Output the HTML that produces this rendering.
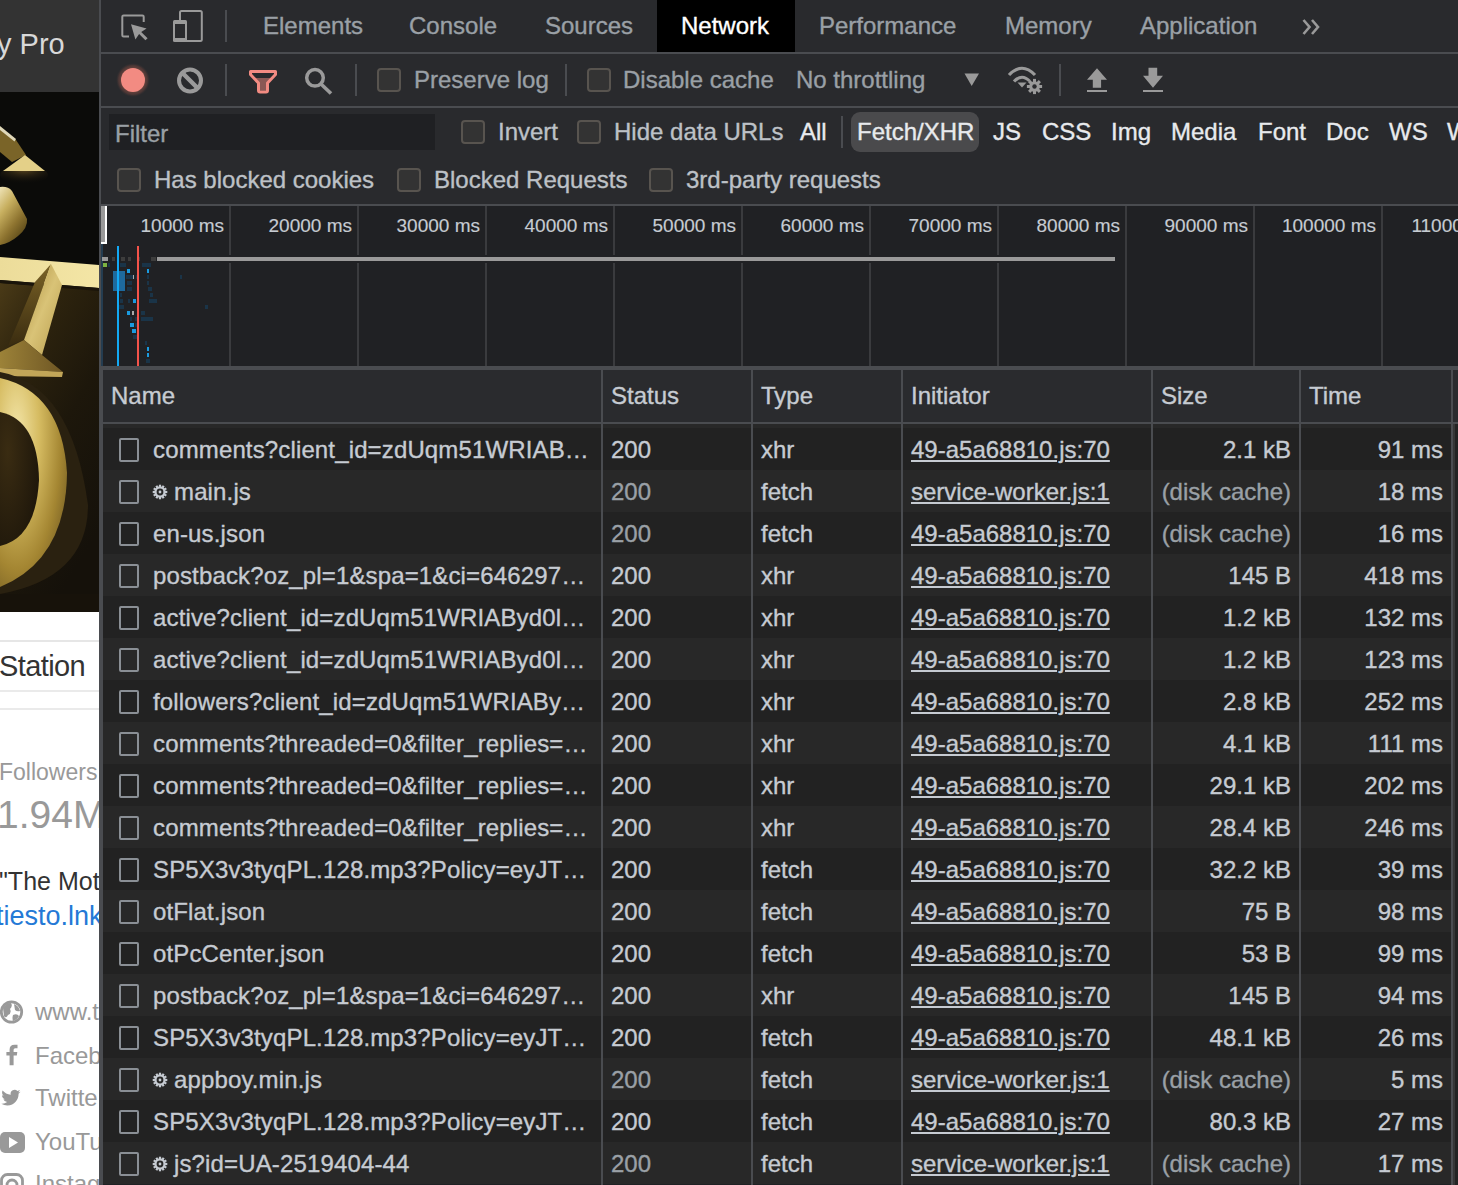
<!DOCTYPE html>
<html><head><meta charset="utf-8"><style>
html,body{margin:0;padding:0;}
body{width:1458px;height:1185px;overflow:hidden;position:relative;background:#202124;font-family:"Liberation Sans", sans-serif;}
.t{position:absolute;white-space:nowrap;font-family:"Liberation Sans", sans-serif;-webkit-text-stroke:0.35px currentColor;}
.lp .t{-webkit-text-stroke:0;}
.r{position:absolute;}
svg{display:block}
</style></head><body>
<div class="r lp" style="left:0;top:0;width:99px;height:1185px;background:#fff;overflow:hidden">
<div class="r" style="left:0;top:0;width:99px;height:92px;background:#333333"></div>
<div class="t" style="left:-3px;top:30px;font-size:29px;line-height:29px;color:#d8d8d8">y Pro</div>
<svg class="r" style="left:0;top:92px" width="99" height="520" viewBox="0 92 99 520">
<defs>
<linearGradient id="gband" x1="0" y1="0" x2="1" y2="0"><stop offset="0" stop-color="#ecdc9a"/><stop offset="1" stop-color="#f4e6a6"/></linearGradient>
<linearGradient id="gpanel" x1="0" y1="0" x2="0.5" y2="1"><stop offset="0" stop-color="#4a3a17"/><stop offset="0.25" stop-color="#2e240e"/><stop offset="0.6" stop-color="#1d170b"/><stop offset="1" stop-color="#15110a"/></linearGradient>
<linearGradient id="gspike" x1="0" y1="0" x2="1" y2="1"><stop offset="0" stop-color="#a88a3a"/><stop offset="0.5" stop-color="#d9c377"/><stop offset="1" stop-color="#b89c4c"/></linearGradient>
<linearGradient id="gspikeL" x1="0" y1="0" x2="0" y2="1"><stop offset="0" stop-color="#7a6226"/><stop offset="1" stop-color="#3a2c10"/></linearGradient>
<linearGradient id="garm" x1="0" y1="0" x2="1" y2="0"><stop offset="0" stop-color="#9c8238"/><stop offset="1" stop-color="#6e5624"/></linearGradient>
<radialGradient id="gring" cx="0.25" cy="0.25" r="0.95"><stop offset="0" stop-color="#f2e4a6"/><stop offset="0.35" stop-color="#d6bc62"/><stop offset="0.7" stop-color="#a48632"/><stop offset="1" stop-color="#6a5420"/></radialGradient>
<radialGradient id="gin" cx="0.2" cy="0.3" r="0.9"><stop offset="0" stop-color="#3a2c12"/><stop offset="1" stop-color="#1c150a"/></radialGradient>
<linearGradient id="gcone" x1="0" y1="0" x2="0.6" y2="1"><stop offset="0" stop-color="#efe4b8"/><stop offset="0.35" stop-color="#c8b060"/><stop offset="0.7" stop-color="#8e7430"/><stop offset="1" stop-color="#5a4818"/></linearGradient>
<radialGradient id="gglow" cx="0.5" cy="0.2" r="0.8"><stop offset="0" stop-color="#5a4620"/><stop offset="1" stop-color="#0c0b09" stop-opacity="0"/></radialGradient>
</defs>
<rect x="0" y="92" width="99" height="520" fill="#0b0b09"/>
<ellipse cx="24" cy="175" rx="24" ry="9" fill="url(#gglow)"/>
<polygon points="0,127 16,140 26,155 12,162 0,152" fill="#7a6428"/>
<polygon points="0,126 16,139 14.5,141.5 0,130" fill="#e0d8b8"/>
<polygon points="3,171 25,155 45,171" fill="#e4d088"/>
<path d="M0,187 Q8,186 12,191 L27,219 Q28,228 18,236 Q10,243 0,245 Z" fill="url(#gcone)"/>
<polygon points="0,283 99,290 99,612 0,612" fill="url(#gpanel)"/>
<polygon points="0,257 99,265 99,288 0,280" fill="url(#gband)"/>
<polygon points="0,280 99,288 99,291 0,283" fill="#1a140a"/>
<polygon points="35,282 51,264 24,340 8,346" fill="url(#gspikeL)"/>
<polygon points="51,264 62,285 42,355 24,340" fill="url(#gspike)"/>
<polygon points="0,352 24,340 42,355 63,372 0,368" fill="url(#garm)"/>
<polygon points="0,368 63,372 62,377 0,376" fill="#c2a658"/>
<path d="M0,372 Q72,385 88,505 Q88,578 0,594 Z" fill="#2a2110"/>
<path d="M0,378 Q62,392 67,473 Q66,560 0,587 Z" fill="url(#gring)"/>
<path d="M0,412 Q38,420 39,480 Q36,538 0,546 Z" fill="url(#gin)"/>
<rect x="0" y="594" width="99" height="18" fill="#17120a"/>
</svg>
<div class="r" style="left:0;top:640px;width:99px;height:2px;background:#e6e6e6"></div>
<div class="t" style="left:-1px;top:652px;font-size:29px;line-height:29px;color:#333;letter-spacing:-0.6px">Station</div>
<div class="r" style="left:0;top:690px;width:99px;height:2px;background:#eaeaea"></div>
<div class="r" style="left:0;top:708px;width:99px;height:2px;background:#eaeaea"></div>
<div class="t" style="left:-1px;top:761px;font-size:23px;line-height:23px;color:#999">Followers</div>
<div class="t" style="left:-3px;top:795px;font-size:39px;line-height:39px;color:#999">1.94M</div>
<div class="t" style="left:-1px;top:869px;font-size:25px;line-height:25px;color:#333">"The Mot</div>
<div class="t" style="left:-4px;top:903px;font-size:27px;line-height:27px;color:#2479d6">tiesto.lnk</div>
<div class="t" style="left:35px;top:1000px;font-size:24px;line-height:24px;color:#999">www.t</div>
<div class="t" style="left:35px;top:1044px;font-size:24px;line-height:24px;color:#999">Faceb</div>
<div class="t" style="left:35px;top:1086px;font-size:24px;line-height:24px;color:#999">Twitte</div>
<div class="t" style="left:35px;top:1130px;font-size:24px;line-height:24px;color:#999">YouTu</div>
<div class="t" style="left:35px;top:1172px;font-size:24px;line-height:24px;color:#999">Instag</div>
<svg class="r" style="left:0;top:990px" width="30" height="195" viewBox="0 990 30 195">
<circle cx="11.5" cy="1012" r="10.2" fill="none" stroke="#999" stroke-width="2.8"/>
<path d="M3,1008 Q6,1003 11,1003 Q13,1006 10,1009 Q12,1013 8,1015 Q6,1019 4,1016 Z M14,1004 Q19,1006 20,1011 Q17,1012 15,1010 Z M13,1015 Q17,1013 19,1016 Q17,1020 13,1021 Q12,1018 13,1015 Z" fill="#999"/>
<path d="M9.6,1065.3 L9.6,1055.5 L6.4,1055.5 L6.4,1052 L9.6,1052 L9.6,1049.5 Q9.6,1044.7 14.5,1044.7 L17.5,1044.7 L17.5,1048.2 L15.2,1048.2 Q13.6,1048.2 13.6,1049.8 L13.6,1052 L17.3,1052 L16.8,1055.5 L13.6,1055.5 L13.6,1065.3 Z" fill="#999"/>
<g transform="translate(1.3,1088) scale(0.8)"><path d="M23.953 4.57a10 10 0 01-2.825.775 4.958 4.958 0 002.163-2.723c-.951.555-2.005.959-3.127 1.184a4.92 4.92 0 00-8.384 4.482C7.69 8.095 4.067 6.13 1.64 3.162a4.822 4.822 0 00-.666 2.475c0 1.71.87 3.213 2.188 4.096a4.904 4.904 0 01-2.228-.616v.06a4.923 4.923 0 003.946 4.827 4.996 4.996 0 01-2.212.085 4.936 4.936 0 004.604 3.417 9.867 9.867 0 01-6.102 2.105c-.39 0-.779-.023-1.17-.067a13.995 13.995 0 007.557 2.209c9.053 0 13.998-7.496 13.998-13.985 0-.21 0-.42-.015-.63A9.935 9.935 0 0024 4.59z" fill="#999"/></g>
<rect x="0" y="1132" width="25" height="21" rx="5" fill="#999"/>
<polygon points="9,1137 9,1148 18,1142.5" fill="#fff"/>
<rect x="1.5" y="1174.5" width="21" height="21" rx="6" fill="none" stroke="#999" stroke-width="2.8"/>
<circle cx="12" cy="1185" r="5" fill="none" stroke="#999" stroke-width="2.8"/>
</svg>
</div>
<div class="r" style="left:99px;top:0px;width:2px;height:1185px;background:#4a4c50;"></div>
<div class="r" style="left:101px;top:0px;width:1357px;height:52px;background:#292a2d;"></div>
<div class="r" style="left:101px;top:52px;width:1357px;height:2px;background:#4a4c50;"></div>
<div class="r" style="left:101px;top:54px;width:1357px;height:52px;background:#292a2d;"></div>
<div class="r" style="left:101px;top:106px;width:1357px;height:2px;background:#4a4c50;"></div>
<div class="r" style="left:101px;top:108px;width:1357px;height:96px;background:#292a2d;"></div>
<div class="r" style="left:101px;top:204px;width:1357px;height:2px;background:#4a4c50;"></div>
<div class="r" style="left:101px;top:206px;width:1357px;height:160px;background:#202124;"></div>
<div class="r" style="left:101px;top:366px;width:1357px;height:4px;background:#4a4c50;"></div>
<svg class="r" style="left:101px;top:0" width="140" height="52" viewBox="101 0 140 52">
<path d="M129,36.6 L123.6,36.6 Q122.3,36.6 122.3,35.3 L122.3,16.7 Q122.3,15.4 123.6,15.4 L142.4,15.4 Q143.7,15.4 143.7,16.7 L143.7,22" fill="none" stroke="#9a9a9a" stroke-width="2"/>
<polygon points="131,24.2 146.6,28.6 141.2,32 147.6,38.2 145.4,40.2 139.1,34 135.4,39.6" fill="#9a9a9a"/>
<rect x="180" y="11.1" width="21.8" height="29.9" rx="1.5" fill="none" stroke="#9a9a9a" stroke-width="2"/>
<rect x="173" y="20" width="14" height="22" rx="1.5" fill="#9a9a9a"/>
<rect x="175" y="24" width="10" height="14" fill="#292a2d"/>
</svg>
<div class="r" style="left:225px;top:10px;width:2px;height:32px;background:#4a4c50;"></div>
<div class="r" style="left:657px;top:0px;width:138px;height:52px;background:#000;"></div>
<div class="t" style="left:263px;top:14px;font-size:24px;line-height:24px;color:#9aa0a6;">Elements</div>
<div class="t" style="left:409px;top:14px;font-size:24px;line-height:24px;color:#9aa0a6;">Console</div>
<div class="t" style="left:545px;top:14px;font-size:24px;line-height:24px;color:#9aa0a6;">Sources</div>
<div class="t" style="left:681px;top:14px;font-size:24px;line-height:24px;color:#ffffff;">Network</div>
<div class="t" style="left:819px;top:14px;font-size:24px;line-height:24px;color:#9aa0a6;">Performance</div>
<div class="t" style="left:1005px;top:14px;font-size:24px;line-height:24px;color:#9aa0a6;">Memory</div>
<div class="t" style="left:1140px;top:14px;font-size:24px;line-height:24px;color:#9aa0a6;">Application</div>
<svg class="r" style="left:1300px;top:17px" width="24" height="20" viewBox="0 0 24 20">
<path d="M3.5,3 L9.5,10 L3.5,17 M12,3 L18,10 L12,17" fill="none" stroke="#9a9a9a" stroke-width="2.6"/>
</svg>
<svg class="r" style="left:101px;top:54px" width="300" height="52" viewBox="101 54 300 52">
<defs><radialGradient id="glow"><stop offset="0.65" stop-color="#6e4640" stop-opacity="1"/><stop offset="0.85" stop-color="#5a3c38" stop-opacity="0.7"/><stop offset="1" stop-color="#3a3032" stop-opacity="0"/></radialGradient></defs>
<circle cx="133" cy="80" r="17" fill="url(#glow)"/>
<circle cx="133" cy="80" r="12" fill="#f28b82"/>
<circle cx="190" cy="80.5" r="11" fill="none" stroke="#9a9a9a" stroke-width="4"/>
<line x1="182.5" y1="73" x2="197.5" y2="88" stroke="#9a9a9a" stroke-width="4.4"/>
<polygon points="254,78 272,78 266.5,84 266.5,90.5 259.5,90.5 259.5,84" fill="#8a5854"/>
<path d="M250.5,71.5 L275.5,71.5 L275.5,74.5 L267.5,83 L267.5,90.5 Q267.5,92 266,92 L260,92 Q258.5,92 258.5,90.5 L258.5,83 L250.5,74.5 Z" fill="none" stroke="#f28b82" stroke-width="3" stroke-linejoin="round"/>
<circle cx="315" cy="77.8" r="8.3" fill="none" stroke="#9a9a9a" stroke-width="3.5"/>
<line x1="321" y1="84" x2="331" y2="93.5" stroke="#9a9a9a" stroke-width="3.6"/>
</svg>
<div class="r" style="left:225px;top:64px;width:2px;height:32px;background:#4a4c50;"></div>
<div class="r" style="left:355px;top:64px;width:2px;height:32px;background:#4a4c50;"></div>
<div class="r" style="left:377px;top:68px;width:20px;height:20px;background:#333333;border:2px solid #58544f;border-radius:4px"></div>
<div class="t" style="left:414px;top:68px;font-size:24px;line-height:24px;color:#9aa0a6;">Preserve log</div>
<div class="r" style="left:565px;top:64px;width:2px;height:32px;background:#4a4c50;"></div>
<div class="r" style="left:587px;top:68px;width:20px;height:20px;background:#333333;border:2px solid #58544f;border-radius:4px"></div>
<div class="t" style="left:623px;top:68px;font-size:24px;line-height:24px;color:#9aa0a6;">Disable cache</div>
<div class="t" style="left:796px;top:68px;font-size:24px;line-height:24px;color:#9aa0a6;">No throttling</div>
<svg class="r" style="left:955px;top:54px" width="220" height="52" viewBox="955 54 220 52">
<polygon points="964.5,73.5 979,73.5 971.7,86" fill="#9a9a9a"/>
<path d="M1009,75 Q1022,61.5 1035,75" fill="none" stroke="#9a9a9a" stroke-width="3.2"/>
<path d="M1014,81.5 Q1022,73 1030,81.5" fill="none" stroke="#9a9a9a" stroke-width="3.2"/>
<polygon points="1017.5,82.5 1026.5,82.5 1022,87.5" fill="#9a9a9a"/>
<circle cx="1034.5" cy="86.5" r="7.5" fill="#292a2d"/>
<circle cx="1034.5" cy="86.5" r="5.3" fill="#9a9a9a"/><rect x="1033.0" y="78.9" width="3" height="3.5" transform="rotate(0 1034.5 86.5)" fill="#9a9a9a"/><rect x="1033.0" y="78.9" width="3" height="3.5" transform="rotate(45 1034.5 86.5)" fill="#9a9a9a"/><rect x="1033.0" y="78.9" width="3" height="3.5" transform="rotate(90 1034.5 86.5)" fill="#9a9a9a"/><rect x="1033.0" y="78.9" width="3" height="3.5" transform="rotate(135 1034.5 86.5)" fill="#9a9a9a"/><rect x="1033.0" y="78.9" width="3" height="3.5" transform="rotate(180 1034.5 86.5)" fill="#9a9a9a"/><rect x="1033.0" y="78.9" width="3" height="3.5" transform="rotate(225 1034.5 86.5)" fill="#9a9a9a"/><rect x="1033.0" y="78.9" width="3" height="3.5" transform="rotate(270 1034.5 86.5)" fill="#9a9a9a"/><rect x="1033.0" y="78.9" width="3" height="3.5" transform="rotate(315 1034.5 86.5)" fill="#9a9a9a"/>
<circle cx="1034.5" cy="86.5" r="2.2" fill="#292a2d"/>
<polygon points="1097,68.3 1107,79.8 1101.1,79.8 1101.1,87.7 1092.8,87.7 1092.8,79.8 1087,79.8" fill="#9a9a9a"/>
<rect x="1087" y="90" width="20" height="2" fill="#9a9a9a"/>
<polygon points="1148.5,67.8 1157.2,67.8 1157.2,75.8 1163,75.8 1153,87.7 1143,75.8 1148.5,75.8" fill="#9a9a9a"/>
<rect x="1143" y="90" width="20" height="2" fill="#9a9a9a"/>
</svg>
<div class="r" style="left:1059px;top:64px;width:2px;height:32px;background:#4a4c50;"></div>
<div class="r" style="left:109px;top:114px;width:326px;height:36px;background:#1f2023;"></div>
<div class="t" style="left:115px;top:122px;font-size:24px;line-height:24px;color:#9aa0a6;">Filter</div>
<div class="r" style="left:461px;top:120px;width:20px;height:20px;background:#333333;border:2px solid #58544f;border-radius:4px"></div>
<div class="t" style="left:498px;top:120px;font-size:24px;line-height:24px;color:#bdc1c6;">Invert</div>
<div class="r" style="left:577px;top:120px;width:20px;height:20px;background:#333333;border:2px solid #58544f;border-radius:4px"></div>
<div class="t" style="left:614px;top:120px;font-size:24px;line-height:24px;color:#bdc1c6;">Hide data URLs</div>
<div class="t" style="left:800px;top:120px;font-size:24px;line-height:24px;color:#e8eaed;">All</div>
<div class="r" style="left:841px;top:116px;width:2px;height:32px;background:#4a4c50;"></div>
<div class="r" style="left:851px;top:112px;width:128px;height:40px;background:#4a4a4c;border-radius:9px"></div>
<div class="t" style="left:857px;top:120px;font-size:24px;line-height:24px;color:#e8eaed;">Fetch/XHR</div>
<div class="t" style="left:993px;top:120px;font-size:24px;line-height:24px;color:#e8eaed;">JS</div>
<div class="t" style="left:1042px;top:120px;font-size:24px;line-height:24px;color:#e8eaed;">CSS</div>
<div class="t" style="left:1111px;top:120px;font-size:24px;line-height:24px;color:#e8eaed;">Img</div>
<div class="t" style="left:1171px;top:120px;font-size:24px;line-height:24px;color:#e8eaed;">Media</div>
<div class="t" style="left:1258px;top:120px;font-size:24px;line-height:24px;color:#e8eaed;">Font</div>
<div class="t" style="left:1326px;top:120px;font-size:24px;line-height:24px;color:#e8eaed;">Doc</div>
<div class="t" style="left:1389px;top:120px;font-size:24px;line-height:24px;color:#e8eaed;">WS</div>
<div class="t" style="left:1447px;top:120px;font-size:24px;line-height:24px;color:#e8eaed;">W</div>
<div class="r" style="left:117px;top:168px;width:20px;height:20px;background:#333333;border:2px solid #58544f;border-radius:4px"></div>
<div class="t" style="left:154px;top:168px;font-size:24px;line-height:24px;color:#bdc1c6;">Has blocked cookies</div>
<div class="r" style="left:397px;top:168px;width:20px;height:20px;background:#333333;border:2px solid #58544f;border-radius:4px"></div>
<div class="t" style="left:434px;top:168px;font-size:24px;line-height:24px;color:#bdc1c6;">Blocked Requests</div>
<div class="r" style="left:649px;top:168px;width:20px;height:20px;background:#333333;border:2px solid #58544f;border-radius:4px"></div>
<div class="t" style="left:686px;top:168px;font-size:24px;line-height:24px;color:#bdc1c6;">3rd-party requests</div>
<div class="r" style="left:229px;top:206px;width:2px;height:160px;background:#3a3b3e;"></div>
<div class="r" style="left:357px;top:206px;width:2px;height:160px;background:#3a3b3e;"></div>
<div class="r" style="left:485px;top:206px;width:2px;height:160px;background:#3a3b3e;"></div>
<div class="r" style="left:613px;top:206px;width:2px;height:160px;background:#3a3b3e;"></div>
<div class="r" style="left:741px;top:206px;width:2px;height:160px;background:#3a3b3e;"></div>
<div class="r" style="left:869px;top:206px;width:2px;height:160px;background:#3a3b3e;"></div>
<div class="r" style="left:997px;top:206px;width:2px;height:160px;background:#3a3b3e;"></div>
<div class="r" style="left:1125px;top:206px;width:2px;height:160px;background:#3a3b3e;"></div>
<div class="r" style="left:1253px;top:206px;width:2px;height:160px;background:#3a3b3e;"></div>
<div class="r" style="left:1381px;top:206px;width:2px;height:160px;background:#3a3b3e;"></div>
<div class="t" style="right:1234px;top:216px;font-size:19px;line-height:19px;color:#c6cbd2;-webkit-text-stroke:0.15px currentColor">10000 ms</div>
<div class="t" style="right:1106px;top:216px;font-size:19px;line-height:19px;color:#c6cbd2;-webkit-text-stroke:0.15px currentColor">20000 ms</div>
<div class="t" style="right:978px;top:216px;font-size:19px;line-height:19px;color:#c6cbd2;-webkit-text-stroke:0.15px currentColor">30000 ms</div>
<div class="t" style="right:850px;top:216px;font-size:19px;line-height:19px;color:#c6cbd2;-webkit-text-stroke:0.15px currentColor">40000 ms</div>
<div class="t" style="right:722px;top:216px;font-size:19px;line-height:19px;color:#c6cbd2;-webkit-text-stroke:0.15px currentColor">50000 ms</div>
<div class="t" style="right:594px;top:216px;font-size:19px;line-height:19px;color:#c6cbd2;-webkit-text-stroke:0.15px currentColor">60000 ms</div>
<div class="t" style="right:466px;top:216px;font-size:19px;line-height:19px;color:#c6cbd2;-webkit-text-stroke:0.15px currentColor">70000 ms</div>
<div class="t" style="right:338px;top:216px;font-size:19px;line-height:19px;color:#c6cbd2;-webkit-text-stroke:0.15px currentColor">80000 ms</div>
<div class="t" style="right:210px;top:216px;font-size:19px;line-height:19px;color:#c6cbd2;-webkit-text-stroke:0.15px currentColor">90000 ms</div>
<div class="t" style="right:82px;top:216px;font-size:19px;line-height:19px;color:#c6cbd2;-webkit-text-stroke:0.15px currentColor">100000 ms</div>
<div class="t" style="right:-46px;top:216px;font-size:19px;line-height:19px;color:#c6cbd2;-webkit-text-stroke:0.15px currentColor">110000 ms</div>
<div class="r" style="left:101px;top:206px;width:4px;height:36px;background:#9a9a9a;"></div>
<div class="r" style="left:105px;top:206px;width:2px;height:38px;background:#ffffff;"></div>
<div class="r" style="left:101px;top:242px;width:6px;height:2px;background:#ffffff;"></div>
<div class="r" style="left:101px;top:244px;width:2px;height:122px;background:#243c50;"></div>
<div class="r" style="left:155px;top:255px;width:961px;height:8px;background:#202124;"></div>
<div class="r" style="left:157px;top:257px;width:958px;height:4px;background:#9a9a9a;"></div>
<div class="r" style="left:102px;top:257px;width:6px;height:4px;background:#9a9a9a;"></div>
<div class="r" style="left:112px;top:257px;width:3px;height:4px;background:#3d3d3d;"></div>
<div class="r" style="left:121px;top:257px;width:4px;height:4px;background:#3d3d3d;"></div>
<div class="r" style="left:128px;top:257px;width:3px;height:4px;background:#3d3d3d;"></div>
<div class="r" style="left:137px;top:257px;width:3px;height:4px;background:#3d3d3d;"></div>
<div class="r" style="left:151px;top:257px;width:5px;height:4px;background:#3d3d3d;"></div>
<div class="r" style="left:103px;top:263px;width:4px;height:4px;background:#7cb342;"></div>
<div class="r" style="left:113px;top:271px;width:12px;height:20px;background:#1e6a9e;"></div>
<div class="r" style="left:108px;top:263px;width:2px;height:4px;background:#1a3448;"></div>
<div class="r" style="left:120px;top:263px;width:6px;height:4px;background:#1a3448;"></div>
<div class="r" style="left:142px;top:263px;width:9px;height:4px;background:#1a3448;"></div>
<div class="r" style="left:127px;top:269px;width:3px;height:4px;background:#1a9be0;"></div>
<div class="r" style="left:147px;top:269px;width:2px;height:4px;background:#1a9be0;"></div>
<div class="r" style="left:126px;top:275px;width:7px;height:4px;background:#1a3448;"></div>
<div class="r" style="left:133px;top:275px;width:1px;height:4px;background:#aaaaaa;"></div>
<div class="r" style="left:136px;top:275px;width:3px;height:4px;background:#1a3448;"></div>
<div class="r" style="left:147px;top:275px;width:2px;height:4px;background:#1a3448;"></div>
<div class="r" style="left:180px;top:275px;width:2px;height:4px;background:#1a3448;"></div>
<div class="r" style="left:127px;top:281px;width:5px;height:4px;background:#1a3448;"></div>
<div class="r" style="left:147px;top:281px;width:2px;height:4px;background:#1a3448;"></div>
<div class="r" style="left:127px;top:287px;width:5px;height:4px;background:#1a3448;"></div>
<div class="r" style="left:148px;top:287px;width:4px;height:4px;background:#1a3448;"></div>
<div class="r" style="left:120px;top:293px;width:2px;height:4px;background:#1a3448;"></div>
<div class="r" style="left:150px;top:293px;width:3px;height:4px;background:#1a3448;"></div>
<div class="r" style="left:120px;top:299px;width:3px;height:4px;background:#1a3448;"></div>
<div class="r" style="left:128px;top:299px;width:2px;height:4px;background:#1a3448;"></div>
<div class="r" style="left:133px;top:299px;width:3px;height:4px;background:#1a9be0;"></div>
<div class="r" style="left:149px;top:299px;width:8px;height:4px;background:#1a3448;"></div>
<div class="r" style="left:119px;top:305px;width:5px;height:4px;background:#1a3448;"></div>
<div class="r" style="left:205px;top:305px;width:3px;height:4px;background:#1a3448;"></div>
<div class="r" style="left:127px;top:311px;width:3px;height:4px;background:#1a9be0;"></div>
<div class="r" style="left:132px;top:311px;width:2px;height:4px;background:#aaaaaa;"></div>
<div class="r" style="left:141px;top:311px;width:4px;height:4px;background:#1a3448;"></div>
<div class="r" style="left:130px;top:317px;width:2px;height:4px;background:#1a3448;"></div>
<div class="r" style="left:135px;top:317px;width:2px;height:4px;background:#1a3448;"></div>
<div class="r" style="left:141px;top:317px;width:12px;height:4px;background:#1a3448;"></div>
<div class="r" style="left:130px;top:323px;width:4px;height:4px;background:#1a9be0;"></div>
<div class="r" style="left:135px;top:323px;width:2px;height:4px;background:#1a3448;"></div>
<div class="r" style="left:132px;top:329px;width:4px;height:4px;background:#1a9be0;"></div>
<div class="r" style="left:133px;top:335px;width:4px;height:4px;background:#1a3448;"></div>
<div class="r" style="left:145px;top:341px;width:2px;height:4px;background:#1a3448;"></div>
<div class="r" style="left:147px;top:347px;width:2px;height:4px;background:#1a9be0;"></div>
<div class="r" style="left:147px;top:353px;width:2px;height:4px;background:#1a9be0;"></div>
<div class="r" style="left:146px;top:359px;width:4px;height:4px;background:#1a3448;"></div>
<div class="r" style="left:117px;top:246px;width:2px;height:120px;background:#12a9f5;"></div>
<div class="r" style="left:137px;top:246px;width:2px;height:120px;background:#f4534a;"></div>
<div class="r" style="left:101px;top:370px;width:1357px;height:52px;background:#2a2b2e;"></div>
<div class="r" style="left:101px;top:422px;width:1357px;height:2px;background:#4a4c50;"></div>
<div class="r" style="left:101px;top:370px;width:2px;height:815px;background:#4a4c50;"></div>
<div class="t" style="left:111px;top:384px;font-size:24px;line-height:24px;color:#c6cbd2;">Name</div>
<div class="t" style="left:611px;top:384px;font-size:24px;line-height:24px;color:#c6cbd2;">Status</div>
<div class="t" style="left:761px;top:384px;font-size:24px;line-height:24px;color:#c6cbd2;">Type</div>
<div class="t" style="left:911px;top:384px;font-size:24px;line-height:24px;color:#c6cbd2;">Initiator</div>
<div class="t" style="left:1161px;top:384px;font-size:24px;line-height:24px;color:#c6cbd2;">Size</div>
<div class="t" style="left:1309px;top:384px;font-size:24px;line-height:24px;color:#c6cbd2;">Time</div>
<div class="r" style="left:103px;top:424px;width:1355px;height:4px;background:#282828;"></div>
<div class="r" style="left:103px;top:428px;width:1355px;height:42px;background:#222222;"></div>
<div class="r" style="left:103px;top:470px;width:1355px;height:42px;background:#282828;"></div>
<div class="r" style="left:103px;top:512px;width:1355px;height:42px;background:#222222;"></div>
<div class="r" style="left:103px;top:554px;width:1355px;height:42px;background:#282828;"></div>
<div class="r" style="left:103px;top:596px;width:1355px;height:42px;background:#222222;"></div>
<div class="r" style="left:103px;top:638px;width:1355px;height:42px;background:#282828;"></div>
<div class="r" style="left:103px;top:680px;width:1355px;height:42px;background:#222222;"></div>
<div class="r" style="left:103px;top:722px;width:1355px;height:42px;background:#282828;"></div>
<div class="r" style="left:103px;top:764px;width:1355px;height:42px;background:#222222;"></div>
<div class="r" style="left:103px;top:806px;width:1355px;height:42px;background:#282828;"></div>
<div class="r" style="left:103px;top:848px;width:1355px;height:42px;background:#222222;"></div>
<div class="r" style="left:103px;top:890px;width:1355px;height:42px;background:#282828;"></div>
<div class="r" style="left:103px;top:932px;width:1355px;height:42px;background:#222222;"></div>
<div class="r" style="left:103px;top:974px;width:1355px;height:42px;background:#282828;"></div>
<div class="r" style="left:103px;top:1016px;width:1355px;height:42px;background:#222222;"></div>
<div class="r" style="left:103px;top:1058px;width:1355px;height:42px;background:#282828;"></div>
<div class="r" style="left:103px;top:1100px;width:1355px;height:42px;background:#222222;"></div>
<div class="r" style="left:103px;top:1142px;width:1355px;height:42px;background:#282828;"></div>
<div class="r" style="left:1453px;top:424px;width:5px;height:761px;background:#232323;"></div>
<div class="r" style="left:1453px;top:424px;width:2px;height:761px;background:#363636;"></div>
<div class="r" style="left:601px;top:370px;width:2px;height:815px;background:#4a4c50;"></div>
<div class="r" style="left:751px;top:370px;width:2px;height:815px;background:#4a4c50;"></div>
<div class="r" style="left:901px;top:370px;width:2px;height:815px;background:#4a4c50;"></div>
<div class="r" style="left:1151px;top:370px;width:2px;height:815px;background:#4a4c50;"></div>
<div class="r" style="left:1299px;top:370px;width:2px;height:815px;background:#4a4c50;"></div>
<div class="r" style="left:1451px;top:370px;width:2px;height:815px;background:#4a4c50;"></div>
<div class="r" style="left:119px;top:438px;width:16px;height:20px;background:#222222;border:2px solid #8a8f95;border-radius:2px"></div>
<div class="t" style="left:153px;top:438px;font-size:24px;line-height:24px;color:#c6cbd2;letter-spacing:0.14px">comments?client_id=zdUqm51WRIAB…</div>
<div class="t" style="left:611px;top:438px;font-size:24px;line-height:24px;color:#c6cbd2;">200</div>
<div class="t" style="left:761px;top:438px;font-size:24px;line-height:24px;color:#c6cbd2;">xhr</div>
<div class="t" style="left:911px;top:438px;font-size:24px;line-height:24px;color:#c6cbd2;text-decoration:underline;text-underline-offset:2px;text-decoration-thickness:2px">49-a5a68810.js:70</div>
<div class="t" style="right:167px;top:438px;font-size:24px;line-height:24px;color:#c6cbd2;">2.1 kB</div>
<div class="t" style="right:15px;top:438px;font-size:24px;line-height:24px;color:#c6cbd2;">91 ms</div>
<div class="r" style="left:119px;top:480px;width:16px;height:20px;background:#282828;border:2px solid #8a8f95;border-radius:2px"></div>
<svg width="16" height="16" viewBox="-8 -8 16 16" style="position:absolute;left:152px;top:484.4px"><g fill="#c6cbd2"><circle r="5.7"/><rect x="-1.1" y="-7.3" width="2.2" height="2.6" transform="rotate(0)"/><rect x="-1.1" y="-7.3" width="2.2" height="2.6" transform="rotate(30)"/><rect x="-1.1" y="-7.3" width="2.2" height="2.6" transform="rotate(60)"/><rect x="-1.1" y="-7.3" width="2.2" height="2.6" transform="rotate(90)"/><rect x="-1.1" y="-7.3" width="2.2" height="2.6" transform="rotate(120)"/><rect x="-1.1" y="-7.3" width="2.2" height="2.6" transform="rotate(150)"/><rect x="-1.1" y="-7.3" width="2.2" height="2.6" transform="rotate(180)"/><rect x="-1.1" y="-7.3" width="2.2" height="2.6" transform="rotate(210)"/><rect x="-1.1" y="-7.3" width="2.2" height="2.6" transform="rotate(240)"/><rect x="-1.1" y="-7.3" width="2.2" height="2.6" transform="rotate(270)"/><rect x="-1.1" y="-7.3" width="2.2" height="2.6" transform="rotate(300)"/><rect x="-1.1" y="-7.3" width="2.2" height="2.6" transform="rotate(330)"/></g><circle r="3.4" fill="#282828"/><circle r="1.4" fill="#c6cbd2"/></svg>
<div class="t" style="left:174px;top:480px;font-size:24px;line-height:24px;color:#c6cbd2;letter-spacing:0.14px">main.js</div>
<div class="t" style="left:611px;top:480px;font-size:24px;line-height:24px;color:#9aa0a6;">200</div>
<div class="t" style="left:761px;top:480px;font-size:24px;line-height:24px;color:#c6cbd2;">fetch</div>
<div class="t" style="left:911px;top:480px;font-size:24px;line-height:24px;color:#c6cbd2;text-decoration:underline;text-underline-offset:2px;text-decoration-thickness:2px">service-worker.js:1</div>
<div class="t" style="right:167px;top:480px;font-size:24px;line-height:24px;color:#9aa0a6;">(disk cache)</div>
<div class="t" style="right:15px;top:480px;font-size:24px;line-height:24px;color:#c6cbd2;">18 ms</div>
<div class="r" style="left:119px;top:522px;width:16px;height:20px;background:#222222;border:2px solid #8a8f95;border-radius:2px"></div>
<div class="t" style="left:153px;top:522px;font-size:24px;line-height:24px;color:#c6cbd2;letter-spacing:0.14px">en-us.json</div>
<div class="t" style="left:611px;top:522px;font-size:24px;line-height:24px;color:#9aa0a6;">200</div>
<div class="t" style="left:761px;top:522px;font-size:24px;line-height:24px;color:#c6cbd2;">fetch</div>
<div class="t" style="left:911px;top:522px;font-size:24px;line-height:24px;color:#c6cbd2;text-decoration:underline;text-underline-offset:2px;text-decoration-thickness:2px">49-a5a68810.js:70</div>
<div class="t" style="right:167px;top:522px;font-size:24px;line-height:24px;color:#9aa0a6;">(disk cache)</div>
<div class="t" style="right:15px;top:522px;font-size:24px;line-height:24px;color:#c6cbd2;">16 ms</div>
<div class="r" style="left:119px;top:564px;width:16px;height:20px;background:#282828;border:2px solid #8a8f95;border-radius:2px"></div>
<div class="t" style="left:153px;top:564px;font-size:24px;line-height:24px;color:#c6cbd2;letter-spacing:0.14px">postback?oz_pl=1&amp;spa=1&amp;ci=646297…</div>
<div class="t" style="left:611px;top:564px;font-size:24px;line-height:24px;color:#c6cbd2;">200</div>
<div class="t" style="left:761px;top:564px;font-size:24px;line-height:24px;color:#c6cbd2;">xhr</div>
<div class="t" style="left:911px;top:564px;font-size:24px;line-height:24px;color:#c6cbd2;text-decoration:underline;text-underline-offset:2px;text-decoration-thickness:2px">49-a5a68810.js:70</div>
<div class="t" style="right:167px;top:564px;font-size:24px;line-height:24px;color:#c6cbd2;">145 B</div>
<div class="t" style="right:15px;top:564px;font-size:24px;line-height:24px;color:#c6cbd2;">418 ms</div>
<div class="r" style="left:119px;top:606px;width:16px;height:20px;background:#222222;border:2px solid #8a8f95;border-radius:2px"></div>
<div class="t" style="left:153px;top:606px;font-size:24px;line-height:24px;color:#c6cbd2;letter-spacing:0.14px">active?client_id=zdUqm51WRIAByd0l…</div>
<div class="t" style="left:611px;top:606px;font-size:24px;line-height:24px;color:#c6cbd2;">200</div>
<div class="t" style="left:761px;top:606px;font-size:24px;line-height:24px;color:#c6cbd2;">xhr</div>
<div class="t" style="left:911px;top:606px;font-size:24px;line-height:24px;color:#c6cbd2;text-decoration:underline;text-underline-offset:2px;text-decoration-thickness:2px">49-a5a68810.js:70</div>
<div class="t" style="right:167px;top:606px;font-size:24px;line-height:24px;color:#c6cbd2;">1.2 kB</div>
<div class="t" style="right:15px;top:606px;font-size:24px;line-height:24px;color:#c6cbd2;">132 ms</div>
<div class="r" style="left:119px;top:648px;width:16px;height:20px;background:#282828;border:2px solid #8a8f95;border-radius:2px"></div>
<div class="t" style="left:153px;top:648px;font-size:24px;line-height:24px;color:#c6cbd2;letter-spacing:0.14px">active?client_id=zdUqm51WRIAByd0l…</div>
<div class="t" style="left:611px;top:648px;font-size:24px;line-height:24px;color:#c6cbd2;">200</div>
<div class="t" style="left:761px;top:648px;font-size:24px;line-height:24px;color:#c6cbd2;">xhr</div>
<div class="t" style="left:911px;top:648px;font-size:24px;line-height:24px;color:#c6cbd2;text-decoration:underline;text-underline-offset:2px;text-decoration-thickness:2px">49-a5a68810.js:70</div>
<div class="t" style="right:167px;top:648px;font-size:24px;line-height:24px;color:#c6cbd2;">1.2 kB</div>
<div class="t" style="right:15px;top:648px;font-size:24px;line-height:24px;color:#c6cbd2;">123 ms</div>
<div class="r" style="left:119px;top:690px;width:16px;height:20px;background:#222222;border:2px solid #8a8f95;border-radius:2px"></div>
<div class="t" style="left:153px;top:690px;font-size:24px;line-height:24px;color:#c6cbd2;letter-spacing:0.14px">followers?client_id=zdUqm51WRIABy…</div>
<div class="t" style="left:611px;top:690px;font-size:24px;line-height:24px;color:#c6cbd2;">200</div>
<div class="t" style="left:761px;top:690px;font-size:24px;line-height:24px;color:#c6cbd2;">xhr</div>
<div class="t" style="left:911px;top:690px;font-size:24px;line-height:24px;color:#c6cbd2;text-decoration:underline;text-underline-offset:2px;text-decoration-thickness:2px">49-a5a68810.js:70</div>
<div class="t" style="right:167px;top:690px;font-size:24px;line-height:24px;color:#c6cbd2;">2.8 kB</div>
<div class="t" style="right:15px;top:690px;font-size:24px;line-height:24px;color:#c6cbd2;">252 ms</div>
<div class="r" style="left:119px;top:732px;width:16px;height:20px;background:#282828;border:2px solid #8a8f95;border-radius:2px"></div>
<div class="t" style="left:153px;top:732px;font-size:24px;line-height:24px;color:#c6cbd2;letter-spacing:0.14px">comments?threaded=0&amp;filter_replies=…</div>
<div class="t" style="left:611px;top:732px;font-size:24px;line-height:24px;color:#c6cbd2;">200</div>
<div class="t" style="left:761px;top:732px;font-size:24px;line-height:24px;color:#c6cbd2;">xhr</div>
<div class="t" style="left:911px;top:732px;font-size:24px;line-height:24px;color:#c6cbd2;text-decoration:underline;text-underline-offset:2px;text-decoration-thickness:2px">49-a5a68810.js:70</div>
<div class="t" style="right:167px;top:732px;font-size:24px;line-height:24px;color:#c6cbd2;">4.1 kB</div>
<div class="t" style="right:15px;top:732px;font-size:24px;line-height:24px;color:#c6cbd2;">111 ms</div>
<div class="r" style="left:119px;top:774px;width:16px;height:20px;background:#222222;border:2px solid #8a8f95;border-radius:2px"></div>
<div class="t" style="left:153px;top:774px;font-size:24px;line-height:24px;color:#c6cbd2;letter-spacing:0.14px">comments?threaded=0&amp;filter_replies=…</div>
<div class="t" style="left:611px;top:774px;font-size:24px;line-height:24px;color:#c6cbd2;">200</div>
<div class="t" style="left:761px;top:774px;font-size:24px;line-height:24px;color:#c6cbd2;">xhr</div>
<div class="t" style="left:911px;top:774px;font-size:24px;line-height:24px;color:#c6cbd2;text-decoration:underline;text-underline-offset:2px;text-decoration-thickness:2px">49-a5a68810.js:70</div>
<div class="t" style="right:167px;top:774px;font-size:24px;line-height:24px;color:#c6cbd2;">29.1 kB</div>
<div class="t" style="right:15px;top:774px;font-size:24px;line-height:24px;color:#c6cbd2;">202 ms</div>
<div class="r" style="left:119px;top:816px;width:16px;height:20px;background:#282828;border:2px solid #8a8f95;border-radius:2px"></div>
<div class="t" style="left:153px;top:816px;font-size:24px;line-height:24px;color:#c6cbd2;letter-spacing:0.14px">comments?threaded=0&amp;filter_replies=…</div>
<div class="t" style="left:611px;top:816px;font-size:24px;line-height:24px;color:#c6cbd2;">200</div>
<div class="t" style="left:761px;top:816px;font-size:24px;line-height:24px;color:#c6cbd2;">xhr</div>
<div class="t" style="left:911px;top:816px;font-size:24px;line-height:24px;color:#c6cbd2;text-decoration:underline;text-underline-offset:2px;text-decoration-thickness:2px">49-a5a68810.js:70</div>
<div class="t" style="right:167px;top:816px;font-size:24px;line-height:24px;color:#c6cbd2;">28.4 kB</div>
<div class="t" style="right:15px;top:816px;font-size:24px;line-height:24px;color:#c6cbd2;">246 ms</div>
<div class="r" style="left:119px;top:858px;width:16px;height:20px;background:#222222;border:2px solid #8a8f95;border-radius:2px"></div>
<div class="t" style="left:153px;top:858px;font-size:24px;line-height:24px;color:#c6cbd2;letter-spacing:0.14px">SP5X3v3tyqPL.128.mp3?Policy=eyJT…</div>
<div class="t" style="left:611px;top:858px;font-size:24px;line-height:24px;color:#c6cbd2;">200</div>
<div class="t" style="left:761px;top:858px;font-size:24px;line-height:24px;color:#c6cbd2;">fetch</div>
<div class="t" style="left:911px;top:858px;font-size:24px;line-height:24px;color:#c6cbd2;text-decoration:underline;text-underline-offset:2px;text-decoration-thickness:2px">49-a5a68810.js:70</div>
<div class="t" style="right:167px;top:858px;font-size:24px;line-height:24px;color:#c6cbd2;">32.2 kB</div>
<div class="t" style="right:15px;top:858px;font-size:24px;line-height:24px;color:#c6cbd2;">39 ms</div>
<div class="r" style="left:119px;top:900px;width:16px;height:20px;background:#282828;border:2px solid #8a8f95;border-radius:2px"></div>
<div class="t" style="left:153px;top:900px;font-size:24px;line-height:24px;color:#c6cbd2;letter-spacing:0.14px">otFlat.json</div>
<div class="t" style="left:611px;top:900px;font-size:24px;line-height:24px;color:#c6cbd2;">200</div>
<div class="t" style="left:761px;top:900px;font-size:24px;line-height:24px;color:#c6cbd2;">fetch</div>
<div class="t" style="left:911px;top:900px;font-size:24px;line-height:24px;color:#c6cbd2;text-decoration:underline;text-underline-offset:2px;text-decoration-thickness:2px">49-a5a68810.js:70</div>
<div class="t" style="right:167px;top:900px;font-size:24px;line-height:24px;color:#c6cbd2;">75 B</div>
<div class="t" style="right:15px;top:900px;font-size:24px;line-height:24px;color:#c6cbd2;">98 ms</div>
<div class="r" style="left:119px;top:942px;width:16px;height:20px;background:#222222;border:2px solid #8a8f95;border-radius:2px"></div>
<div class="t" style="left:153px;top:942px;font-size:24px;line-height:24px;color:#c6cbd2;letter-spacing:0.14px">otPcCenter.json</div>
<div class="t" style="left:611px;top:942px;font-size:24px;line-height:24px;color:#c6cbd2;">200</div>
<div class="t" style="left:761px;top:942px;font-size:24px;line-height:24px;color:#c6cbd2;">fetch</div>
<div class="t" style="left:911px;top:942px;font-size:24px;line-height:24px;color:#c6cbd2;text-decoration:underline;text-underline-offset:2px;text-decoration-thickness:2px">49-a5a68810.js:70</div>
<div class="t" style="right:167px;top:942px;font-size:24px;line-height:24px;color:#c6cbd2;">53 B</div>
<div class="t" style="right:15px;top:942px;font-size:24px;line-height:24px;color:#c6cbd2;">99 ms</div>
<div class="r" style="left:119px;top:984px;width:16px;height:20px;background:#282828;border:2px solid #8a8f95;border-radius:2px"></div>
<div class="t" style="left:153px;top:984px;font-size:24px;line-height:24px;color:#c6cbd2;letter-spacing:0.14px">postback?oz_pl=1&amp;spa=1&amp;ci=646297…</div>
<div class="t" style="left:611px;top:984px;font-size:24px;line-height:24px;color:#c6cbd2;">200</div>
<div class="t" style="left:761px;top:984px;font-size:24px;line-height:24px;color:#c6cbd2;">xhr</div>
<div class="t" style="left:911px;top:984px;font-size:24px;line-height:24px;color:#c6cbd2;text-decoration:underline;text-underline-offset:2px;text-decoration-thickness:2px">49-a5a68810.js:70</div>
<div class="t" style="right:167px;top:984px;font-size:24px;line-height:24px;color:#c6cbd2;">145 B</div>
<div class="t" style="right:15px;top:984px;font-size:24px;line-height:24px;color:#c6cbd2;">94 ms</div>
<div class="r" style="left:119px;top:1026px;width:16px;height:20px;background:#222222;border:2px solid #8a8f95;border-radius:2px"></div>
<div class="t" style="left:153px;top:1026px;font-size:24px;line-height:24px;color:#c6cbd2;letter-spacing:0.14px">SP5X3v3tyqPL.128.mp3?Policy=eyJT…</div>
<div class="t" style="left:611px;top:1026px;font-size:24px;line-height:24px;color:#c6cbd2;">200</div>
<div class="t" style="left:761px;top:1026px;font-size:24px;line-height:24px;color:#c6cbd2;">fetch</div>
<div class="t" style="left:911px;top:1026px;font-size:24px;line-height:24px;color:#c6cbd2;text-decoration:underline;text-underline-offset:2px;text-decoration-thickness:2px">49-a5a68810.js:70</div>
<div class="t" style="right:167px;top:1026px;font-size:24px;line-height:24px;color:#c6cbd2;">48.1 kB</div>
<div class="t" style="right:15px;top:1026px;font-size:24px;line-height:24px;color:#c6cbd2;">26 ms</div>
<div class="r" style="left:119px;top:1068px;width:16px;height:20px;background:#282828;border:2px solid #8a8f95;border-radius:2px"></div>
<svg width="16" height="16" viewBox="-8 -8 16 16" style="position:absolute;left:152px;top:1072.4px"><g fill="#c6cbd2"><circle r="5.7"/><rect x="-1.1" y="-7.3" width="2.2" height="2.6" transform="rotate(0)"/><rect x="-1.1" y="-7.3" width="2.2" height="2.6" transform="rotate(30)"/><rect x="-1.1" y="-7.3" width="2.2" height="2.6" transform="rotate(60)"/><rect x="-1.1" y="-7.3" width="2.2" height="2.6" transform="rotate(90)"/><rect x="-1.1" y="-7.3" width="2.2" height="2.6" transform="rotate(120)"/><rect x="-1.1" y="-7.3" width="2.2" height="2.6" transform="rotate(150)"/><rect x="-1.1" y="-7.3" width="2.2" height="2.6" transform="rotate(180)"/><rect x="-1.1" y="-7.3" width="2.2" height="2.6" transform="rotate(210)"/><rect x="-1.1" y="-7.3" width="2.2" height="2.6" transform="rotate(240)"/><rect x="-1.1" y="-7.3" width="2.2" height="2.6" transform="rotate(270)"/><rect x="-1.1" y="-7.3" width="2.2" height="2.6" transform="rotate(300)"/><rect x="-1.1" y="-7.3" width="2.2" height="2.6" transform="rotate(330)"/></g><circle r="3.4" fill="#282828"/><circle r="1.4" fill="#c6cbd2"/></svg>
<div class="t" style="left:174px;top:1068px;font-size:24px;line-height:24px;color:#c6cbd2;letter-spacing:0.14px">appboy.min.js</div>
<div class="t" style="left:611px;top:1068px;font-size:24px;line-height:24px;color:#9aa0a6;">200</div>
<div class="t" style="left:761px;top:1068px;font-size:24px;line-height:24px;color:#c6cbd2;">fetch</div>
<div class="t" style="left:911px;top:1068px;font-size:24px;line-height:24px;color:#c6cbd2;text-decoration:underline;text-underline-offset:2px;text-decoration-thickness:2px">service-worker.js:1</div>
<div class="t" style="right:167px;top:1068px;font-size:24px;line-height:24px;color:#9aa0a6;">(disk cache)</div>
<div class="t" style="right:15px;top:1068px;font-size:24px;line-height:24px;color:#c6cbd2;">5 ms</div>
<div class="r" style="left:119px;top:1110px;width:16px;height:20px;background:#222222;border:2px solid #8a8f95;border-radius:2px"></div>
<div class="t" style="left:153px;top:1110px;font-size:24px;line-height:24px;color:#c6cbd2;letter-spacing:0.14px">SP5X3v3tyqPL.128.mp3?Policy=eyJT…</div>
<div class="t" style="left:611px;top:1110px;font-size:24px;line-height:24px;color:#c6cbd2;">200</div>
<div class="t" style="left:761px;top:1110px;font-size:24px;line-height:24px;color:#c6cbd2;">fetch</div>
<div class="t" style="left:911px;top:1110px;font-size:24px;line-height:24px;color:#c6cbd2;text-decoration:underline;text-underline-offset:2px;text-decoration-thickness:2px">49-a5a68810.js:70</div>
<div class="t" style="right:167px;top:1110px;font-size:24px;line-height:24px;color:#c6cbd2;">80.3 kB</div>
<div class="t" style="right:15px;top:1110px;font-size:24px;line-height:24px;color:#c6cbd2;">27 ms</div>
<div class="r" style="left:119px;top:1152px;width:16px;height:20px;background:#282828;border:2px solid #8a8f95;border-radius:2px"></div>
<svg width="16" height="16" viewBox="-8 -8 16 16" style="position:absolute;left:152px;top:1156.4px"><g fill="#c6cbd2"><circle r="5.7"/><rect x="-1.1" y="-7.3" width="2.2" height="2.6" transform="rotate(0)"/><rect x="-1.1" y="-7.3" width="2.2" height="2.6" transform="rotate(30)"/><rect x="-1.1" y="-7.3" width="2.2" height="2.6" transform="rotate(60)"/><rect x="-1.1" y="-7.3" width="2.2" height="2.6" transform="rotate(90)"/><rect x="-1.1" y="-7.3" width="2.2" height="2.6" transform="rotate(120)"/><rect x="-1.1" y="-7.3" width="2.2" height="2.6" transform="rotate(150)"/><rect x="-1.1" y="-7.3" width="2.2" height="2.6" transform="rotate(180)"/><rect x="-1.1" y="-7.3" width="2.2" height="2.6" transform="rotate(210)"/><rect x="-1.1" y="-7.3" width="2.2" height="2.6" transform="rotate(240)"/><rect x="-1.1" y="-7.3" width="2.2" height="2.6" transform="rotate(270)"/><rect x="-1.1" y="-7.3" width="2.2" height="2.6" transform="rotate(300)"/><rect x="-1.1" y="-7.3" width="2.2" height="2.6" transform="rotate(330)"/></g><circle r="3.4" fill="#282828"/><circle r="1.4" fill="#c6cbd2"/></svg>
<div class="t" style="left:174px;top:1152px;font-size:24px;line-height:24px;color:#c6cbd2;letter-spacing:0.14px">js?id=UA-2519404-44</div>
<div class="t" style="left:611px;top:1152px;font-size:24px;line-height:24px;color:#9aa0a6;">200</div>
<div class="t" style="left:761px;top:1152px;font-size:24px;line-height:24px;color:#c6cbd2;">fetch</div>
<div class="t" style="left:911px;top:1152px;font-size:24px;line-height:24px;color:#c6cbd2;text-decoration:underline;text-underline-offset:2px;text-decoration-thickness:2px">service-worker.js:1</div>
<div class="t" style="right:167px;top:1152px;font-size:24px;line-height:24px;color:#9aa0a6;">(disk cache)</div>
<div class="t" style="right:15px;top:1152px;font-size:24px;line-height:24px;color:#c6cbd2;">17 ms</div>
</body></html>
